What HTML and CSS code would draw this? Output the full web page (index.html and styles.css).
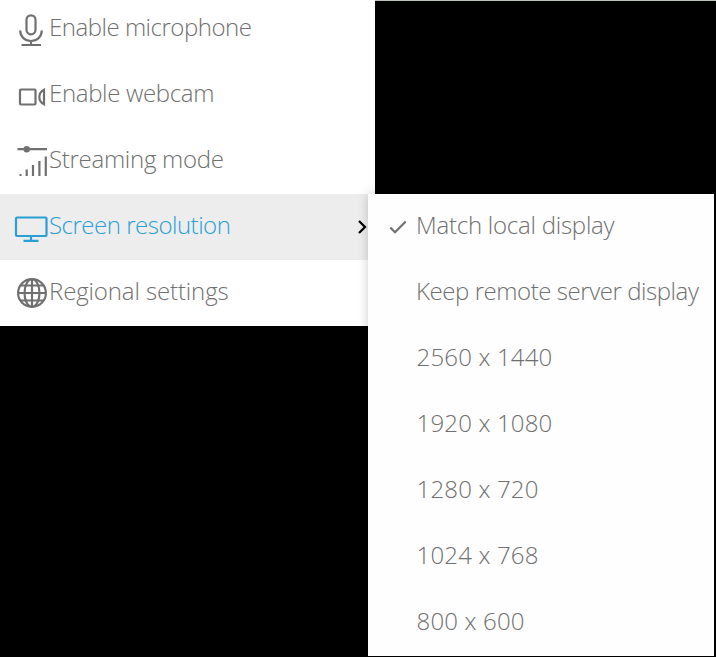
FILE: index.html
```html
<!DOCTYPE html>
<html lang="en">
<head>
<meta charset="utf-8">
<title>Settings menu</title>
<link rel="stylesheet" href="styles.css">
</head>
<body>
<main class="screen">
  <nav class="menu">
    <div class="row"><svg class="icon" viewBox="0 0 34 34"><rect x="11.500" y="1.300" width="9" height="19" rx="4.500"/><path d="M5.200 16.500c0 6 4.500 10.500 10.800 10.500s10.800-4.500 10.800-10.500M16 27v4M6.500 31H26"/></svg><span class="label mic">Enable microphone</span></div>
    <div class="row"><svg class="icon" viewBox="0 0 34 34"><rect x="5" y="9.500" width="15.500" height="15" rx="1"/><path d="M29 9.800v14.400c-3-1.500-4.700-3.800-4.700-7.200s1.700-5.700 4.700-7.200z"/></svg><span class="label cam">Enable webcam</span></div>
    <div class="row"><svg class="icon" viewBox="0 0 34 34"><path d="M2.500 3.200h29.500M4.500 29h2M11.700 23.500V30M18 19v11M24.400 15v15M30.800 10.500V30"/><circle class="dot" cx="11.700" cy="3.200" r="3.200"/></svg><span class="label stream">Streaming mode</span></div>
    <div class="row active"><svg class="icon" viewBox="0 0 34 34"><rect x="1" y="7.500" width="30.500" height="18.500" rx="1"/><path d="M16 26v4.500M8.500 30.800h15"/></svg><span class="label res">Screen resolution</span><svg class="chevron" viewBox="0 0 10 14"><path d="M2 1l6 6-6 6"/></svg></div>
    <div class="row"><svg class="icon" viewBox="0 0 34 34"><circle cx="17" cy="17" r="13.900"/><ellipse cx="17" cy="17" rx="7.500" ry="13.900"/><path d="M17 3v28M3 17h28M5.500 9.500h23M5.500 24.500h23"/></svg><span class="label region">Regional settings</span></div>
  </nav>
  <div class="topline"></div>
  <nav class="submenu">
    <div class="row"><svg class="check" viewBox="0 0 18 14"><path d="M1.300 7.500l4.700 4.700L16.700 1.500"/></svg><span class="label match">Match local display</span></div>
    <div class="row"><span class="label keep">Keep remote server display</span></div>
    <div class="row"><span class="label size">2560 x 1440</span></div>
    <div class="row"><span class="label size">1920 x 1080</span></div>
    <div class="row"><span class="label size">1280 x 720</span></div>
    <div class="row"><span class="label size">1024 x 768</span></div>
    <div class="row"><span class="label size">800 x 600</span></div>
  </nav>
</main>
</body>
</html>
```
FILE: styles.css
```css
* { box-sizing: border-box; }
body { margin: 0; background: #000; font: 300 24px/30px "Open Sans", sans-serif; color: #707070; }
.screen { position: relative; width: 716px; height: 657px; overflow: hidden; background: #000; }
.menu { width: 375px; height: 326px; display: flex; flex-direction: column; justify-content: flex-end; background: #fff; overflow: hidden; }
.row { display: flex; align-items: center; flex: 0 0 66px; height: 66px; white-space: nowrap; }
.menu .row { padding-left: 15px; }
.active { background: #ededed; color: #2a9fd6; }
.icon { width: 34px; height: 34px; flex: none; margin-top: 4px; }
.active .icon, .active + .row .icon { margin-top: 0; }
svg { fill: none; stroke: currentColor; stroke-width: 2.2; overflow: visible; }
.dot { fill: currentColor; stroke: none; }
.label { margin-top: -4px; }
.mic { letter-spacing: -.48px; }
.cam { letter-spacing: -.33px; }
.stream { letter-spacing: -.28px; }
.res { letter-spacing: -.49px; }
.region { letter-spacing: -.12px; }
.match { letter-spacing: -.24px; }
.keep { letter-spacing: -.44px; }
.size { letter-spacing: .18px; padding-left: .5px; }
.chevron { width: 10px; height: 14px; margin-left: auto; margin-right: 8px; margin-top: -1px; color: #000; }
.topline { position: absolute; left: 375px; right: 0; top: 0; height: 1px; background: #b8c0b8; }
.submenu { position: absolute; left: 368px; top: 194px; width: 346px; height: 462px; background: #fefefe; box-shadow: 0 0 10px rgba(0,0,0,.2); }
.submenu .row { padding-left: 48px; position: relative; }
.check { position: absolute; left: 21px; top: 25.500px; width: 18px; height: 14px; }
```
